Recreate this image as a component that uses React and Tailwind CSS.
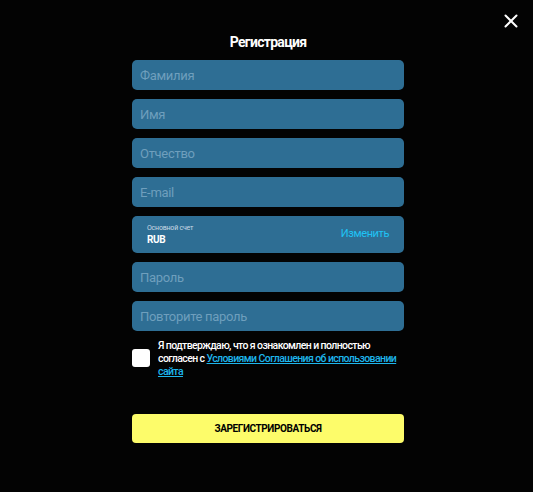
import React from 'react'

const fieldBase = "h-[30px] w-full rounded-[5px] bg-[#2e6e94] px-[8px] text-[13px] text-white placeholder:text-[#6f9fbd] outline-none tracking-[-0.3px]"

function Field({ placeholder, type = 'text' }) {
  return <input type={type} placeholder={placeholder} className={fieldBase} />
}

export default function App() {
  return (
    <div className="relative min-h-[492px] w-full bg-[#030303] font-['Roboto',sans-serif]">
      <button className="absolute right-[15px] top-[14px] text-white" title="Закрыть">
        <svg width="14" height="14" viewBox="0 0 14 14" fill="none" stroke="currentColor" strokeWidth="2" strokeLinecap="round">
          <path d="M1.5 1.5L12.5 12.5M12.5 1.5L1.5 12.5" />
        </svg>
      </button>

      <div className="flex justify-center pl-[3px]">
        <div className="flex w-[272px] flex-col pt-[33px]">
          <h1 className="mb-[9px] text-center text-[14px] font-bold leading-[18px] tracking-[-0.7px] text-white">Регистрация</h1>

          <div className="flex flex-col gap-[9px]">
            <Field placeholder="Фамилия" />
            <Field placeholder="Имя" />
            <Field placeholder="Отчество" />
            <Field placeholder="E-mail" type="email" />

            <div className="flex h-[37px] items-center justify-between rounded-[5px] bg-[#2e6e94] px-[15px]">
              <div className="flex flex-col leading-none">
                <span className="text-[7px] tracking-[-0.2px] text-[#c9d9e4]">Основной счет</span>
                <span className="mt-[3px] text-[10px] font-bold tracking-[-0.4px] text-white">RUB</span>
              </div>
              <button className="text-[11px] tracking-[-0.4px] text-[#1fc3f5]">Изменить</button>
            </div>

            <Field placeholder="Пароль" type="password" />
            <Field placeholder="Повторите пароль" type="password" />
          </div>

          <label className="mt-[8px] flex items-start gap-[8px]">
            <span className="mt-[10px] h-[18px] w-[18px] shrink-0 rounded-[3px] bg-white" />
            <span className="text-[10.5px] font-medium leading-[13px] tracking-[-0.6px] text-white">
              Я подтверждаю, что я ознакомлен и полностью согласен с{' '}
              <a href="#" className="text-[#1eb6ec] underline">Условиями Соглашения об использовании сайта</a>
            </span>
          </label>

          <button className="mt-[36px] h-[29px] w-full rounded-[4px] bg-[#fdfc6a] text-[10px] font-bold tracking-[-0.4px] text-black">
            ЗАРЕГИСТРИРОВАТЬСЯ
          </button>
        </div>
      </div>
    </div>
  )
}
